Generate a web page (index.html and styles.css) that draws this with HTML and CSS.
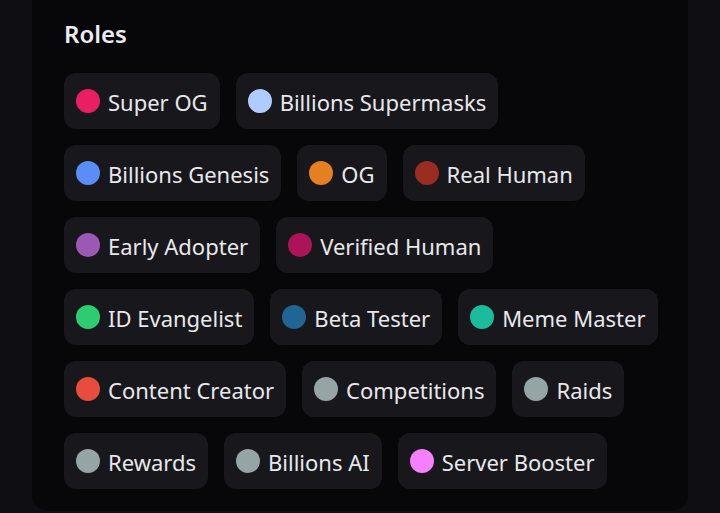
FILE: index.html
```html
<!DOCTYPE html>
<html lang="en">
<head>
<meta charset="utf-8">
<title>Roles</title>
<link rel="stylesheet" href="styles.css">
</head>
<body>
<div class="card">
  <h2 class="title">Roles</h2>
  <div class="roles">
    <div class="row">
      <div class="chip"><span class="dot c-superog"></span><span class="name">Super OG</span></div>
      <div class="chip"><span class="dot c-supermasks"></span><span class="name">Billions Supermasks</span></div>
    </div>
    <div class="row">
      <div class="chip"><span class="dot c-genesis"></span><span class="name">Billions Genesis</span></div>
      <div class="chip"><span class="dot c-og"></span><span class="name">OG</span></div>
      <div class="chip"><span class="dot c-realhuman"></span><span class="name">Real Human</span></div>
    </div>
    <div class="row">
      <div class="chip"><span class="dot c-early"></span><span class="name">Early Adopter</span></div>
      <div class="chip"><span class="dot c-verified"></span><span class="name">Verified Human</span></div>
    </div>
    <div class="row">
      <div class="chip"><span class="dot c-evangelist"></span><span class="name">ID Evangelist</span></div>
      <div class="chip"><span class="dot c-beta"></span><span class="name">Beta Tester</span></div>
      <div class="chip"><span class="dot c-meme"></span><span class="name">Meme Master</span></div>
    </div>
    <div class="row">
      <div class="chip"><span class="dot c-content"></span><span class="name">Content Creator</span></div>
      <div class="chip"><span class="dot c-grey"></span><span class="name">Competitions</span></div>
      <div class="chip"><span class="dot c-grey"></span><span class="name">Raids</span></div>
    </div>
    <div class="row">
      <div class="chip"><span class="dot c-grey"></span><span class="name">Rewards</span></div>
      <div class="chip"><span class="dot c-grey"></span><span class="name">Billions AI</span></div>
      <div class="chip"><span class="dot c-booster"></span><span class="name">Server Booster</span></div>
    </div>
  </div>
</div>
</body>
</html>
```
FILE: styles.css
```css
html, body {
  margin: 0;
  padding: 0;
  height: 100%;
  background: #0e0e13;
  font-family: "Noto Sans", "Open Sans", sans-serif;
  overflow: hidden;
}
.card {
  margin: 0 32px;
  height: 511px;
  box-sizing: border-box;
  background: #07070a;
  border-radius: 0 0 16px 16px;
  padding: 14px 32px 0 32px;
}
.title {
  margin: 0 0 19px 0;
  font-size: 24px;
  font-weight: 600;
  line-height: 40px;
  color: #ececf0;
}
.roles {
  display: flex;
  flex-direction: column;
  gap: 16px;
}
.row {
  display: flex;
  gap: 16px;
}
.chip {
  display: flex;
  align-items: center;
  gap: 8px;
  height: 56px;
  box-sizing: border-box;
  padding: 0 12px;
  background: #18181c;
  border-radius: 12px;
}
.dot {
  width: 24px;
  height: 24px;
  border-radius: 50%;
  flex: none;
}
.name {
  font-size: 22px;
  color: #e8e8ec;
  line-height: 1;
  padding-top: 2px;
  white-space: nowrap;
}
.c-superog { background: #e91e63; }
.c-supermasks { background: #b0cbfd; }
.c-genesis { background: #5b8df6; }
.c-og { background: #e67e22; }
.c-realhuman { background: #992d22; }
.c-early { background: #9b59b6; }
.c-verified { background: #ad1457; }
.c-evangelist { background: #2ecc71; }
.c-beta { background: #206694; }
.c-meme { background: #1abc9c; }
.c-content { background: #e74c3c; }
.c-grey { background: #95a5a6; }
.c-booster { background: #f47fff; }
```
